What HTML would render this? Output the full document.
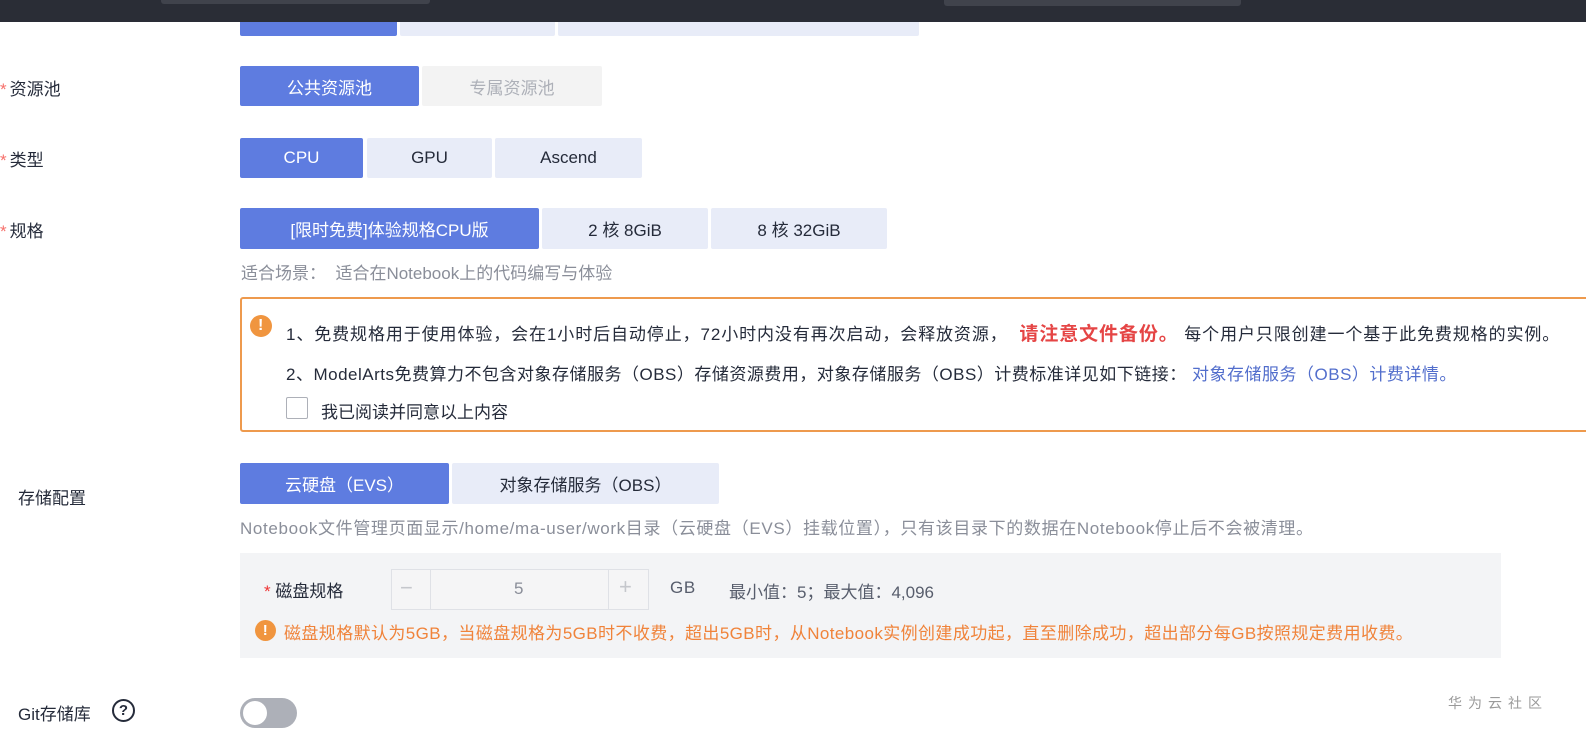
<!DOCTYPE html>
<html><head><meta charset="utf-8"><style>
*{margin:0;padding:0;box-sizing:border-box}
body{width:1586px;height:736px;overflow:hidden;background:#fff;position:relative;font-family:"Liberation Sans","Noto Sans CJK SC",sans-serif;font-size:17px;color:#252b3a;letter-spacing:0.6px}
.a{position:absolute;white-space:nowrap}
.b{position:absolute;display:flex;align-items:center;justify-content:center;background:#e8ecf8;color:#252b3a;font-size:17px;border-radius:2px;letter-spacing:0}
.p{background:#5e7ce0;color:#fff}
.lab{position:absolute;left:0;font-size:17px;color:#252b3a;letter-spacing:0}
.st{color:#f66f6a;margin-right:3px}
</style></head><body>
<div class="b p" style="left:240px;top:10px;width:157px;height:26px"></div>
<div class="b" style="left:400px;top:10px;width:155px;height:26px"></div>
<div class="b" style="left:558px;top:10px;width:361px;height:26px"></div>
<div class="a" style="left:0;top:0;width:1586px;height:22px;background:#2a2d36"></div>
<div class="a" style="left:161px;top:0;width:269px;height:4px;background:#40434c;border-radius:0 0 3px 3px"></div>
<div class="a" style="left:944px;top:0;width:297px;height:6px;background:#40434c;border-radius:0 0 3px 3px"></div>

<div class="lab" style="top:75px"><span class="st">*</span>资源池</div>
<div class="b p" style="left:240px;top:66px;width:179px;height:40px">公共资源池</div>
<div class="b" style="left:422px;top:66px;width:180px;height:40px;background:#f3f3f3;color:#adb0b8">专属资源池</div>

<div class="lab" style="top:146px"><span class="st">*</span>类型</div>
<div class="b p" style="left:240px;top:138px;width:123px;height:40px">CPU</div>
<div class="b" style="left:367px;top:138px;width:125px;height:40px">GPU</div>
<div class="b" style="left:495px;top:138px;width:147px;height:40px">Ascend</div>

<div class="lab" style="top:217px"><span class="st">*</span>规格</div>
<div class="b p" style="left:240px;top:208px;width:299px;height:41px">[限时免费]体验规格CPU版</div>
<div class="b" style="left:542px;top:208px;width:166px;height:41px">2 核 8GiB</div>
<div class="b" style="left:711px;top:208px;width:176px;height:41px">8 核 32GiB</div>
<div class="a" style="left:241px;top:259px;color:#8a8e99;letter-spacing:0">适合场景：&nbsp; 适合在Notebook上的代码编写与体验</div>

<div class="a" style="left:240px;top:297px;width:1360px;height:135px;border:2px solid #ee9a4d;border-radius:3px"></div>
<div class="a" style="left:250px;top:315px;width:22px;height:22px;border-radius:50%;background:#f0953f;color:#fff;font-weight:bold;font-size:16px;text-align:center;line-height:22px">!</div>
<div class="a" style="left:286px;top:319px;letter-spacing:0.9px">1、免费规格用于使用体验，会在1小时后自动停止，72小时内没有再次启动，会释放资源， <span style="color:#e54545;font-weight:bold;font-size:19px">&nbsp;请注意文件备份。</span> 每个用户只限创建一个基于此免费规格的实例。</div>
<div class="a" style="left:286px;top:360px;letter-spacing:0.5px">2、ModelArts免费算力不包含对象存储服务（OBS）存储资源费用，对象存储服务（OBS）计费标准详见如下链接： <span style="color:#526ecc">对象存储服务（OBS）计费详情。</span></div>
<div class="a" style="left:286px;top:397px;width:22px;height:22px;border:1px solid #adb0b8;border-radius:2px"></div>
<div class="a" style="left:321px;top:398px;letter-spacing:0">我已阅读并同意以上内容</div>

<div class="lab" style="top:484px;left:18px">存储配置</div>
<div class="b p" style="left:240px;top:463px;width:209px;height:41px">云硬盘（EVS）</div>
<div class="b" style="left:452px;top:463px;width:267px;height:41px">对象存储服务（OBS）</div>
<div class="a" style="left:240px;top:514px;color:#8a8e99;letter-spacing:0.65px">Notebook文件管理页面显示/home/ma-user/work目录（云硬盘（EVS）挂载位置），只有该目录下的数据在Notebook停止后不会被清理。</div>

<div class="a" style="left:240px;top:553px;width:1261px;height:105px;background:#f3f4f6"></div>
<div class="a" style="left:264px;top:577px;letter-spacing:0"><span style="color:#e33">*</span> 磁盘规格</div>
<div class="a" style="left:391px;top:569px;width:258px;height:41px;border:1px solid #dfe1e6;background:#f5f5f6"></div>
<div class="a" style="left:430px;top:570px;width:1px;height:39px;background:#dfe1e6"></div>
<div class="a" style="left:608px;top:570px;width:1px;height:39px;background:#dfe1e6"></div>
<div class="a" style="left:400px;top:575px;color:#c5c7cc;font-size:22px">−</div>
<div class="a" style="left:619px;top:574px;color:#c5c7cc;font-size:22px">+</div>
<div class="a" style="left:514px;top:579px;color:#8a8e99">5</div>
<div class="a" style="left:670px;top:578px;color:#575d6c">GB</div>
<div class="a" style="left:729px;top:578px;color:#575d6c;letter-spacing:0">最小值：5；最大值：4,096</div>
<div class="a" style="left:255px;top:620px;width:21px;height:21px;border-radius:50%;background:#f0953f;color:#fff;font-weight:bold;font-size:15px;text-align:center;line-height:21px">!</div>
<div class="a" style="left:284px;top:619px;color:#f0833a;letter-spacing:0.4px">磁盘规格默认为5GB，当磁盘规格为5GB时不收费，超出5GB时，从Notebook实例创建成功起，直至删除成功，超出部分每GB按照规定费用收费。</div>

<div class="lab" style="top:700px;left:18px">Git存储库</div>
<div class="a" style="left:112px;top:699px;width:23px;height:23px;border:2px solid #252b3a;border-radius:50%;text-align:center;line-height:19px;font-size:15px;font-weight:bold;letter-spacing:0">?</div>
<div class="a" style="left:240px;top:698px;width:57px;height:30px;border-radius:15px;background:#adb0b8"></div>
<div class="a" style="left:243px;top:701px;width:24px;height:24px;border-radius:50%;background:#fff"></div>
<div class="a" style="left:1448px;top:693px;color:#9a9a9a;font-size:14px;letter-spacing:6px">华为云社区</div>
</body></html>
